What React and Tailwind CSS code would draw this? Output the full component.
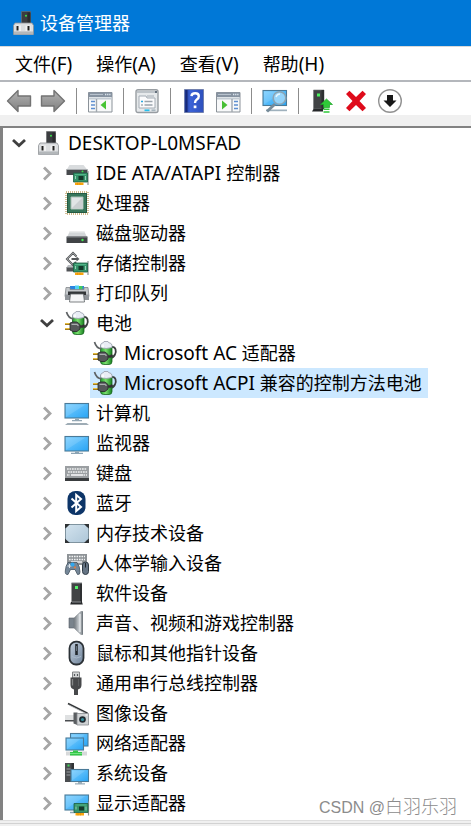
import React from "react";

function Svg({ children, className = "h-6 w-6" }) {
  return (
    <svg viewBox="0 0 24 24" className={`${className} shrink-0 overflow-visible`} aria-hidden="true">
      {children}
    </svg>
  );
}

function Defs() {
  return (
    <svg className="absolute h-0 w-0" aria-hidden="true">
      <defs>
        <linearGradient id="screen" x1="0" y1="0" x2="1" y2="1">
          <stop offset="0" stopColor="#7fd0ff" />
          <stop offset="1" stopColor="#27a4f5" />
        </linearGradient>
        <linearGradient id="memory" x1="0" y1="0" x2="1" y2="1">
          <stop offset="0" stopColor="#d3e3ee" />
          <stop offset="1" stopColor="#adc6d8" />
        </linearGradient>
        <linearGradient id="arrow" x1="0" y1="0" x2="0" y2="1">
          <stop offset="0" stopColor="#b4b4b4" />
          <stop offset="1" stopColor="#7f7f7f" />
        </linearGradient>
        <linearGradient id="battery" x1="0" y1="0" x2="1" y2="0">
          <stop offset="0" stopColor="#1f9a2c" />
          <stop offset="0.45" stopColor="#7be06f" />
          <stop offset="1" stopColor="#16801f" />
        </linearGradient>
        <linearGradient id="cone" x1="0" y1="0" x2="1" y2="0">
          <stop offset="0" stopColor="#6d747a" />
          <stop offset="0.6" stopColor="#c9ced2" />
          <stop offset="1" stopColor="#7c8388" />
        </linearGradient>
        <linearGradient id="mouse" x1="0" y1="0" x2="1" y2="1">
          <stop offset="0" stopColor="#c3d0de" />
          <stop offset="1" stopColor="#6e8299" />
        </linearGradient>
        <linearGradient id="help" x1="0" y1="0" x2="1" y2="0">
          <stop offset="0" stopColor="#1c3494" />
          <stop offset="0.3" stopColor="#3b62d6" />
          <stop offset="1" stopColor="#2e50bd" />
        </linearGradient>
      </defs>
    </svg>
  );
}

function HostIcon() {
  return (
    <Svg>
      <path d="M9.500 .5h9v12.500h-9z" fill="#3b3d40" stroke="#6a6c6f" strokeWidth=".7" />
      <path d="M15.500 1.500h3v11h-3z" fill="#2a2b2d" />
      <circle cx="14" cy="4.700" r="1" fill="#38e04a" />
      <path d="M3 12h17l1.500 2.500v9h-20v-9z" fill="#dcdee0" stroke="#8d9194" strokeWidth=".8" />
      <path d="M2 20.500h19v3H2z" fill="#b3b7ba" />
      <path d="M4 14.500h5v5.500H4zM13.500 14.500h5v5.500h-5z" fill="#f1f1f1" />
      <path d="M4.500 15h2v4.500h-2zM15.500 15h2v4.500h-2z" fill="#222" />
    </Svg>
  );
}

function Card({ x = 0, y = 0 }) {
  return (
    <g transform={`translate(${x} ${y})`}>
      <path d="M14.500-2v14" stroke="#8d9294" strokeWidth="1.200" />
      <path d="M0 0h14v9H0z" fill="#35936a" stroke="#1d5e43" strokeWidth=".8" />
      <path d="M1.500 1.500h11" stroke="#5bbd91" strokeWidth=".8" />
      <path d="M5 3h5v4H5z" fill="#15382b" />
      <path d="M2 3v3M12 3v4" stroke="#9fd8bd" strokeWidth=".9" />
      <path d="M1.500 9.500h8.500V12h-8.500z" fill="#f9a50f" />
      <path d="M4 9.500V12M6.500 9.500V12" stroke="#dd8700" strokeWidth=".5" />
    </g>
  );
}

function IdeIcon() {
  return (
    <Svg>
      <path d="M4.500 4h14l4 5H1.500z" fill="#d9dcde" />
      <path d="M1.500 8.500h21V14h-21z" fill="#46494c" />
      <path d="M1.500 8.500h21" stroke="#a9adb0" />
      <circle cx="17.500" cy="10.500" r="1" fill="#3fe050" />
      <Card x={8.500} y={12} />
    </Svg>
  );
}

function CpuIcon() {
  return (
    <Svg>
      <rect x="1" y="1" width="22" height="22" fill="none" stroke="#c0a468" strokeWidth="1.400" strokeDasharray="1 1" />
      <path d="M2 2h20v20H2z" fill="#37765a" />
      <path d="M2.500 2.500h19v19h-19z" fill="none" stroke="#245a43" />
      <path d="M6 6h12v12H6z" fill="#e2e5e6" stroke="#a9c0b4" />
      <path d="M17.500 6.500v11h-11z" fill="#cbcfd1" />
    </Svg>
  );
}

function DiskIcon() {
  return (
    <Svg>
      <path d="M5 10h14l3 6H2z" fill="#d3d6d8" />
      <path d="M5 10h14l.8 1.500H4.200z" fill="#eceded" />
      <path d="M1.500 15.500h21v6.500h-21z" fill="#404346" />
      <path d="M2 16h20" stroke="#85898c" />
      <circle cx="17.500" cy="19" r="1.200" fill="#45ea55" />
    </Svg>
  );
}

function StorageIcon() {
  return (
    <Svg>
      <path d="M1.500 16h10v4.500h-10z" fill="#505356" />
      <path d="M3 14h7l2 2.500H1.500z" fill="#b9bdc0" />
      <path d="M11.500 5.500 8 2 2 8l6 6 3-3M6.500 8H13" fill="none" stroke="#55585a" strokeWidth="2" />
      <path d="M11 5 8 2 2 8l5.500 5.500" fill="none" stroke="#c3c6c8" strokeWidth=".6" />
      <path d="m11.500 5.500 3 2.500-3 2.500z" fill="#55585a" />
      <Card x={8.500} y={12} />
    </Svg>
  );
}

function PrinterIcon() {
  return (
    <Svg>
      <path d="M5 5h14v5H5z" fill="#2b83df" />
      <path d="M10 4.500h4V9h-4z" fill="#4fd2f5" />
      <path d="M14 5h3.500v4.500H14z" fill="#45cb5b" />
      <path d="M1 6.500h4v2h14v-2h4l1 9H0z" fill="#c4c8cb" stroke="#83888c" strokeWidth=".8" />
      <path d="M0 13.500h24V19H0z" fill="#90959a" />
      <path d="M3 10.500h18V14H3z" fill="#333638" />
      <path d="M5.500 13h13l1 8h-15z" fill="#f5f6f7" stroke="#5e6366" strokeWidth=".8" />
    </Svg>
  );
}

function BatteryIcon() {
  return (
    <Svg>
      <path d="M18.500 6c4.500-.5 5 4 3.500 7.500-1 2-3 3.500-5 3.500" fill="none" stroke="#3c3f40" strokeWidth="1.800" />
      <rect x="7.500" y="3" width="11.500" height="20.500" rx="3" fill="url(#battery)" stroke="#19651f" strokeWidth=".8" />
      <path d="M7.500 6.500V4Q8 2 10.500 1.500L11 .5h4l.5 1q3 .5 3.500 2.500v2.500q-6 2-11.500 0z" fill="#e9edf5" stroke="#979caa" strokeWidth=".8" />
      <path d="M10 3.500v3" stroke="#fff" strokeWidth="1.500" />
      <path d="M1.500 1c1 3.500 3 6.500 7 7" fill="none" stroke="#5e6264" strokeWidth="1.700" />
      <path d="M0 13h6M0 18h6" stroke="#8a6718" strokeWidth="2.200" />
      <path d="M0 12.700h6M0 17.700h6" stroke="#e7bd3e" strokeWidth="1.200" />
      <path d="M5 12 8 11h4l3 2.500V18l-3 2.500H8L5 19z" fill="#55585a" stroke="#242627" strokeWidth=".8" />
      <path d="M6.500 13.300h5.500l1.500 1.500" fill="none" stroke="#a9acae" strokeWidth="1.300" />
      <path d="M15 15.500h2.500l2-1.500" fill="none" stroke="#333" strokeWidth="2.400" />
    </Svg>
  );
}

function Screen({ x, y, w, h }) {
  return (
    <>
      <rect x={x} y={y} width={w} height={h} fill="url(#screen)" stroke="#4a7a98" strokeWidth="1.100" />
      <path d={`M${x + 1} ${y + h - 1}L${x + w - 3} ${y + 1}H${x + 1}z`} fill="#fff" opacity=".13" />
    </>
  );
}

function ComputerIcon() {
  return (
    <Svg>
      <Screen x={0} y={2.500} w={23.500} h={14.500} />
      <path d="M10 17.500h4V19h3v1.200H7V19h3z" fill="#93a7b4" />
      <path d="M2.500 22h19l2.500 2H0z" fill="#9eacb5" />
    </Svg>
  );
}

function MonitorIcon() {
  return (
    <Svg>
      <Screen x={0} y={5.500} w={23.500} h={14.500} />
      <path d="M10 20.500h4v1.300h4V23H6v-1.200h4z" fill="#8ca4b4" />
    </Svg>
  );
}

function KeyboardIcon() {
  return (
    <Svg>
      <path d="M0 5h24v12.500H0z" fill="#9b9fa2" />
      <path d="M0 17h24v3H0z" fill="#393c3e" />
      <path d="M2 8h20M3 11h19M2 14h3M18.500 14H22" stroke="#f0f1f2" strokeWidth="1.700" strokeDasharray="1.700 .8" />
      <path d="M6 14h12" stroke="#f0f1f2" strokeWidth="1.700" />
    </Svg>
  );
}

function BluetoothIcon() {
  return (
    <Svg>
      <rect x="2.500" y="0" width="18" height="24" rx="8" fill="#0d3568" />
      <path d="m6.500 7.500 9.500 8.500-4.800 4V4L16 8l-9.500 8.500" fill="none" stroke="#fff" strokeWidth="2" />
    </Svg>
  );
}

function MemoryIcon() {
  return (
    <Svg>
      <rect x=".5" y="3.500" width="23" height="18" rx="1.500" fill="url(#memory)" stroke="#7f939f" />
      <path d="M0 7.500V3h5L1.500 6.500zM24 7.500V3h-5l3 3zM0 17.500V22h5l-3.500-3zM24 17.500V22h-5l3-3z" fill="#2e3235" />
    </Svg>
  );
}

function HidIcon() {
  return (
    <Svg>
      <path d="M2 3h20v11H2z" fill="#8e9397" />
      <path d="M4 5.500h16M4 8.500h16" stroke="#f2f3f4" strokeWidth="1.600" strokeDasharray="1.600 .9" />
      <path d="M6 11h11" stroke="#f2f3f4" strokeWidth="1.400" />
      <path d="M3 11.500h9q3 4 3 9.500 0 3-2.500 2.500L10 18.500H5.500L3 23.500Q0 24 .3 20 .5 15 3 11.500z" fill="#758798" stroke="#44535f" strokeWidth=".8" />
      <path d="M2.500 15h4M4.500 13v4" stroke="#dce4eb" />
      <circle cx="7.500" cy="13.500" r="2" fill="#31a8ef" />
      <circle cx="10" cy="16.500" r="1" fill="#ed7b36" />
      <rect x="17.500" y="11" width="6" height="12.500" rx="3" fill="#657484" stroke="#2f3b46" strokeWidth="1" />
      <path d="M20.500 12v4.500" stroke="#20272e" />
    </Svg>
  );
}

function TowerIcon() {
  return (
    <Svg>
      <path d="M6.500 2h10.500v19.500H6.500z" fill="#414345" />
      <path d="M15 2h2v19.500h-2z" fill="#2e3032" />
      <path d="M6.500 2H17" stroke="#808386" />
      <path d="M10 5h3v3h-3z" fill="#54f06a" />
      <path d="M6 21h11l.8 2.500H5.200z" fill="#292b2d" />
      <path d="M7 21h9" stroke="#a2a5a7" strokeWidth=".8" />
    </Svg>
  );
}

function SoundIcon() {
  return (
    <Svg>
      <path d="M4 7h5v10H4z" fill="#79838c" stroke="#545d65" strokeWidth=".6" />
      <path d="M9 7 16 .5h1.500v23H16L9 17z" fill="url(#cone)" stroke="#858c92" strokeWidth=".7" />
      <path d="M15 3v18" stroke="#e8ebee" strokeWidth="1.300" />
      <path d="M17.500.5v23" stroke="#6a7177" strokeWidth=".8" />
    </Svg>
  );
}

function MouseIcon() {
  return (
    <Svg>
      <rect x="4.500" y=".7" width="14" height="22.800" rx="6.500" fill="url(#mouse)" stroke="#2b3136" strokeWidth="1.800" />
      <path d="M11.500 3v11" stroke="#22282d" strokeWidth="2.600" />
      <path d="M11.500 5v5" stroke="#65727e" />
      <path d="M7 15.500q4.500 3 9 0" fill="none" stroke="#a9bacb" />
    </Svg>
  );
}

function UsbIcon() {
  return (
    <Svg>
      <path d="M7.500 1h7v6h-7z" fill="#d4d6d7" stroke="#818486" />
      <path d="M9.500 3v2M12.500 3v2" stroke="#55595b" strokeWidth="1.200" />
      <path d="M5.500 6.500h11V14q0 3.500-3.500 4.500V24H9v-5.500q-3.500-1-3.500-4.500z" fill="#47494b" />
      <path d="M7.500 8v6.500" stroke="#858889" strokeWidth="1.300" />
      <path d="M13.500 8v7" stroke="#5c5f61" />
    </Svg>
  );
}

function ImagingIcon() {
  return (
    <Svg>
      <path d="m3 2.500 19.500 9.700" stroke="#303335" strokeWidth="1.800" />
      <path d="m4 4 18 9" stroke="#a9adb0" strokeWidth=".7" />
      <path d="M0 14h10v5H0z" fill="#dfe1e2" />
      <path d="M0 19h10v1.500H0z" fill="#4a4d50" />
      <path d="M8.500 11.500h4V24l-4-1.500z" fill="#5a5e61" />
      <path d="M12 12.500h11.500V24H12z" fill="#cfd2d4" stroke="#888c8f" strokeWidth=".8" />
      <circle cx="17.500" cy="18.500" r="3.300" fill="#1f2b32" />
      <circle cx="17.500" cy="18.500" r="1.600" fill="#378f9d" />
      <path d="M20.500 14h2" stroke="#fff" />
    </Svg>
  );
}

function NetworkIcon() {
  return (
    <Svg>
      <Screen x={5.500} y={2.500} w={17.500} h={12.500} />
      <Screen x={1} y={7} w={17.500} h={12} />
      <path d="M1 20.500h21v4H1z" fill="#d7d9da" />
      <path d="M8 19.500h5V21h4v3.500H5V21h3z" fill="#35c74a" />
      <path d="M5 22.500h12" stroke="#72e381" />
    </Svg>
  );
}

function SystemIcon() {
  return (
    <Svg>
      <path d="M0 2h9v19H0z" fill="#4a4d50" />
      <path d="M6.500 2H9v19H6.500z" fill="#303335" />
      <path d="M1.500 8h4M1.500 11h4M1.500 14h4" stroke="#9a9ea1" />
      <path d="M2.500 3.500h2v2h-2z" fill="#44d85a" />
      <Screen x={6} y={8.500} w={17.500} h={12} />
      <path d="M13 21h4v1.300h3v1.200H10v-1.200h3z" fill="#9badb9" />
    </Svg>
  );
}

function DisplayIcon() {
  return (
    <Svg>
      <Screen x={0} y={4} w={23.500} h={15} />
      <path d="M5 21.500h5" stroke="#8da5b2" strokeWidth="1.500" />
      <Card x={9} y={12.500} />
    </Svg>
  );
}

/* ---------- toolbar drawings ---------- */

function ArrowIcon({ flip }) {
  return (
    <Svg>
      <path
        transform={flip ? "translate(24 0) scale(-1 1)" : undefined}
        d="M.5 12 11 1.500V7h12.500v10H11v5.500z"
        fill="url(#arrow)"
        stroke="#737373"
        strokeWidth="1.400"
        strokeLinejoin="round"
      />
    </Svg>
  );
}

function PaneIcon({ right }) {
  return (
    <Svg>
      <path d="M.5 3.500h23.500v19.500H.5z" fill="#f8f9fa" stroke="#8b9299" />
      <path d="M.5 3.500h23.500V8H.5z" fill="#8793a1" />
      <path d="M2 5.500h13" stroke="#b8c2cd" />
      <path d="M17 5.500h5.500" stroke="#dce5ee" strokeWidth="1.400" strokeDasharray="1.300 .8" />
      <path d="M1 9.500h23" stroke="#c2cad2" strokeWidth="2" />
      {right ? (
        <>
          <path d="M16 10v13" stroke="#a0a7ae" strokeWidth="1.400" />
          <path d="M18 12.500h4M18 16h4M18 19.500h4" stroke="#5d8ed0" strokeWidth="1.600" />
          <path d="M6 11.500v9l5.500-4.500z" fill="#47bf35" />
        </>
      ) : (
        <>
          <path d="M8.500 10v13" stroke="#a0a7ae" strokeWidth="1.400" />
          <path d="M3 12.500h4M3 16h4M3 19.500h4" stroke="#5d8ed0" strokeWidth="1.600" />
          <path d="M18 11.500v9L12.500 16z" fill="#47c435" />
        </>
      )}
    </Svg>
  );
}

function PropertiesIcon() {
  return (
    <Svg>
      <rect x="1" y=".7" width="22" height="22.800" rx="2" fill="#e6e9eb" stroke="#989da2" strokeWidth="1.400" />
      <path d="M2 3h18" stroke="#bdc3c8" strokeWidth="2" />
      <path d="M20 3h2" stroke="#64707c" strokeWidth="2" />
      <path d="M4 7h7l1 2h8v10H4z" fill="#fbfbfc" stroke="#a4acb4" />
      <path d="M12 7h7" stroke="#a4acb4" />
      <path d="M6 12.500h2" stroke="#2aa9df" strokeWidth="1.500" />
      <path d="M9.500 12.500h8M9.500 16h8" stroke="#9ba4ac" strokeWidth="1.300" />
      <path d="M6 16h2" stroke="#a8afb5" strokeWidth="1.500" />
      <path d="M9.500 21.300h5" stroke="#25c0ee" strokeWidth="1.800" />
      <path d="M16.500 21.300h4" stroke="#a7b5be" strokeWidth="1.800" />
    </Svg>
  );
}

function HelpIcon() {
  return (
    <Svg>
      <path d="M2.500.5h19v23h-19z" fill="url(#help)" stroke="#7180ae" />
      <path d="M4.500 1v22" stroke="#172a78" strokeWidth="2" />
      <path d="M9.500 7.200q.2-3 3.700-3 3.600 0 3.600 3 0 2-2 3.300-1.800 1.200-1.800 3.500" fill="none" stroke="#fff" strokeWidth="2.400" />
      <path d="M11.700 16.500h2.700v2.700h-2.700z" fill="#fff" />
    </Svg>
  );
}

function ScanIcon() {
  return (
    <Svg>
      <Screen x={0} y={1.500} w={23.500} h={15} />
      <path d="M3 20.500h21v1.700H3z" fill="#9fb1bd" />
      <path d="M12 15 4 22.500" stroke="#768b99" strokeWidth="3" />
      <circle cx="16.500" cy="9" r="6.300" fill="#a9dcfa" fillOpacity=".8" stroke="#8ba4b4" strokeWidth="1.600" />
      <path d="M13 8q1-3 4-3" fill="none" stroke="#e6f6ff" strokeWidth="1.300" />
    </Svg>
  );
}

function UpdateIcon() {
  return (
    <Svg>
      <path d="M3.500 1h10.500v19H3.500z" fill="#414345" stroke="#737679" strokeWidth=".6" />
      <path d="M11.500 1H14v19h-2.500z" fill="#2d2f31" />
      <path d="M7 4.500h3v3H7z" fill="#4df060" />
      <path d="M3.500 20H13v2.500H2z" fill="#26282a" />
      <path d="m16.500 10 6 5.500h-3v3h-6v-3h-3z" fill="#2fca38" stroke="#1ca426" strokeWidth=".7" />
      <path d="M13.500 20.300h6M13.500 23h6" stroke="#2fca38" strokeWidth="1.400" />
    </Svg>
  );
}

function RemoveIcon() {
  return (
    <Svg>
      <path d="m2 5 3.500-3.300L12 8l6.500-6.300L22 5l-6.500 7 6.500 7-3.500 3.300L12 16l-6.500 6.300L2 19l6.500-7z" fill="#df0b1b" />
    </Svg>
  );
}

function DisableIcon() {
  return (
    <Svg>
      <circle cx="12" cy="12" r="11.300" fill="#fdfdfd" stroke="#919191" strokeWidth="1.400" />
      <path d="M9 6h6v5.500h3.500L12 18l-6.500-6.500H9z" fill="#161616" />
    </Svg>
  );
}

const MENUS = ["文件(F)", "操作(A)", "查看(V)", "帮助(H)"];

const TOOLS = [
  { label: "后退", icon: <ArrowIcon /> },
  { label: "前进", icon: <ArrowIcon flip /> },
  null,
  { label: "显示/隐藏控制台树", icon: <PaneIcon /> },
  null,
  { label: "属性", icon: <PropertiesIcon /> },
  null,
  { label: "帮助", icon: <HelpIcon /> },
  { label: "显示/隐藏操作窗格", icon: <PaneIcon right /> },
  null,
  { label: "扫描检测硬件改动", icon: <ScanIcon /> },
  null,
  { label: "更新驱动程序", icon: <UpdateIcon /> },
  { label: "卸载设备", icon: <RemoveIcon /> },
  { label: "禁用设备", icon: <DisableIcon /> },
];

const CATEGORIES = [
  { name: "IDE ATA/ATAPI 控制器", Icon: IdeIcon },
  { name: "处理器", Icon: CpuIcon },
  { name: "磁盘驱动器", Icon: DiskIcon },
  { name: "存储控制器", Icon: StorageIcon },
  { name: "打印队列", Icon: PrinterIcon },
  {
    name: "电池",
    Icon: BatteryIcon,
    devices: [
      { name: "Microsoft AC 适配器" },
      { name: "Microsoft ACPI 兼容的控制方法电池", selected: true },
    ],
  },
  { name: "计算机", Icon: ComputerIcon },
  { name: "监视器", Icon: MonitorIcon },
  { name: "键盘", Icon: KeyboardIcon },
  { name: "蓝牙", Icon: BluetoothIcon },
  { name: "内存技术设备", Icon: MemoryIcon },
  { name: "人体学输入设备", Icon: HidIcon },
  { name: "软件设备", Icon: TowerIcon },
  { name: "声音、视频和游戏控制器", Icon: SoundIcon },
  { name: "鼠标和其他指针设备", Icon: MouseIcon },
  { name: "通用串行总线控制器", Icon: UsbIcon },
  { name: "图像设备", Icon: ImagingIcon },
  { name: "网络适配器", Icon: NetworkIcon },
  { name: "系统设备", Icon: SystemIcon },
  { name: "显示适配器", Icon: DisplayIcon },
];

/* Latin runs are set one pixel larger than the Chinese characters beside them. */
function Label({ children }) {
  return (
    <span className="whitespace-pre">
      {children.split(/([\x20-\x7e]+)/).map((part, i) =>
        i % 2 ? (
          <span key={i} className="text-[19px]">
            {part}
          </span>
        ) : (
          part
        )
      )}
    </span>
  );
}

function Toggle({ open, name }) {
  return (
    <button type="button" aria-label={name} aria-expanded={open} className="flex h-6 w-6 shrink-0 items-center justify-center">
      <svg viewBox="0 0 16 16" className="h-4 w-4" fill="none" strokeWidth="2.800" aria-hidden="true">
        {open ? <path d="m2 5 6 5.500L14 5" stroke="#404040" /> : <path d="m5 2.500 6 6-6 6" stroke="#a6a6a6" />}
      </svg>
    </button>
  );
}

function Category({ name, Icon, devices }) {
  return (
    <li role="treeitem" aria-expanded={Boolean(devices)}>
      <div className="flex h-[30px] items-center pl-8">
        <Toggle open={Boolean(devices)} name={name} />
        <span className="ml-1.5 flex items-center gap-[7px]">
          <Icon />
          <Label>{name}</Label>
        </span>
      </div>
      {devices && (
        <ul role="group" className="pl-[87px]">
          {devices.map((d) => (
            <li
              key={d.name}
              role="treeitem"
              aria-selected={Boolean(d.selected)}
              className={`flex h-[30px] w-fit items-center gap-[7px] pl-[3px] pr-1.5 ${d.selected ? "bg-[#cce8ff]" : ""}`}
            >
              <Icon />
              <Label>{d.name}</Label>
            </li>
          ))}
        </ul>
      )}
    </li>
  );
}

export default function App() {
  return (
    <div className="relative flex min-h-screen flex-col overflow-hidden bg-[#f0f0f0] font-['Noto_Sans','Noto_Sans_CJK_SC',sans-serif] text-[18px] leading-6 whitespace-nowrap text-black">
      <Defs />
      <header className="flex h-[46px] items-center gap-1 bg-[#0078d7] pl-3 text-white">
        <HostIcon />
        <h1>设备管理器</h1>
      </header>

      <nav className="flex h-9 items-center gap-6 border-t border-b-2 border-t-[#d9d9d9] border-b-[#b4b7bc] bg-white pl-[15px]">
        {MENUS.map((m) => (
          <button key={m} type="button">
            <Label>{m}</Label>
          </button>
        ))}
      </nav>

      <div role="toolbar" className="flex h-[33px] items-center bg-white pl-0.5 pt-1">
        {TOOLS.map((t, i) =>
          t ? (
            <button key={t.label} type="button" aria-label={t.label} className="flex h-7 w-[34px] shrink-0 items-center justify-center">
              {t.icon}
            </button>
          ) : (
            <span key={i} className="flex w-[13px] shrink-0 justify-center">
              <span className="h-[26px] w-px bg-[#8c8c8c]" />
            </span>
          )
        )}
      </div>

      <main className="mt-[11px] border-t-2 border-l-[3px] border-[#828282] bg-white pb-0.5">
        <ul role="tree" aria-label="设备管理器">
          <li role="treeitem" aria-expanded="true">
            <div className="flex h-[30px] items-center pl-1">
              <Toggle open name="DESKTOP-L0MSFAD" />
              <span className="ml-1.5 flex items-center gap-[7px]">
                <HostIcon />
                <Label>DESKTOP-L0MSFAD</Label>
              </span>
            </div>
            <ul role="group">
              {CATEGORIES.map((c) => (
                <Category key={c.name} {...c} />
              ))}
            </ul>
          </li>
        </ul>
      </main>
      <footer className="h-1 border-t border-b border-t-[#dedede] border-b-[#d2d2d2]" />

      <p className="absolute right-3.5 bottom-1.5 font-['Liberation_Sans','Noto_Sans_CJK_SC',sans-serif] font-light text-[#8c8c8c]">
        <span className="text-[16px]">CSDN @</span>白羽乐羽
      </p>
    </div>
  );
}
